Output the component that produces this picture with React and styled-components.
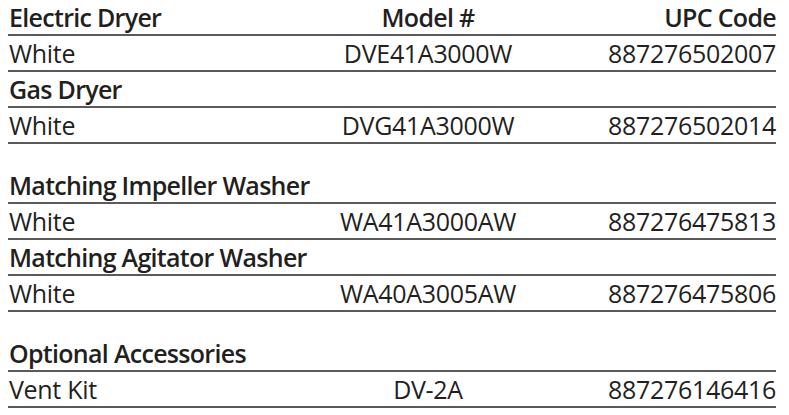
import React from "react";
import styled, { createGlobalStyle } from "styled-components";

const Global = createGlobalStyle`
  html, body { margin: 0; padding: 0; background: #ffffff; }
  body { font-family: "Open Sans", "Noto Sans", sans-serif; color: #231f20; }
`;

const Sheet = styled.div`
  width: 768px;
  padding-left: 8px;
  display: flex;
  flex-direction: column;
`;

const Row = styled.div`
  display: grid;
  grid-template-columns: 320px 200px 1fr;
  height: 34px;
  line-height: 34px;
  border-bottom: 2px solid #5a5a5a;
  font-size: 25px;
  font-weight: ${(p) => (p.$head ? 650 : 400)};
  letter-spacing: ${(p) => (p.$head ? "-0.7px" : "-0.3px")};
  white-space: nowrap;
`;

const Name = styled.div`
  text-align: left;
  padding-left: 1px;
`;

const Model = styled.div`
  text-align: center;
`;

const Upc = styled.div`
  text-align: right;
`;

const Spacer = styled.div`
  height: 24px;
`;

const groups = [
  [
    { head: true, name: "Electric Dryer", model: "Model #", upc: "UPC Code" },
    { name: "White", model: "DVE41A3000W", upc: "887276502007" },
    { head: true, name: "Gas Dryer", model: "", upc: "" },
    { name: "White", model: "DVG41A3000W", upc: "887276502014" },
  ],
  [
    { head: true, name: "Matching Impeller Washer", model: "", upc: "" },
    { name: "White", model: "WA41A3000AW", upc: "887276475813" },
    { head: true, name: "Matching Agitator Washer", model: "", upc: "" },
    { name: "White", model: "WA40A3005AW", upc: "887276475806" },
  ],
  [
    { head: true, name: "Optional Accessories", model: "", upc: "" },
    { name: "Vent Kit", model: "DV-2A", upc: "887276146416" },
  ],
];

export default function App() {
  return (
    <>
      <Global />
      <Sheet>
        {groups.map((g, gi) => (
          <React.Fragment key={gi}>
            {gi > 0 && <Spacer />}
            {g.map((r, ri) => (
              <Row key={ri} $head={r.head}>
                <Name>{r.name}</Name>
                <Model>{r.model}</Model>
                <Upc>{r.upc}</Upc>
              </Row>
            ))}
          </React.Fragment>
        ))}
      </Sheet>
    </>
  );
}
